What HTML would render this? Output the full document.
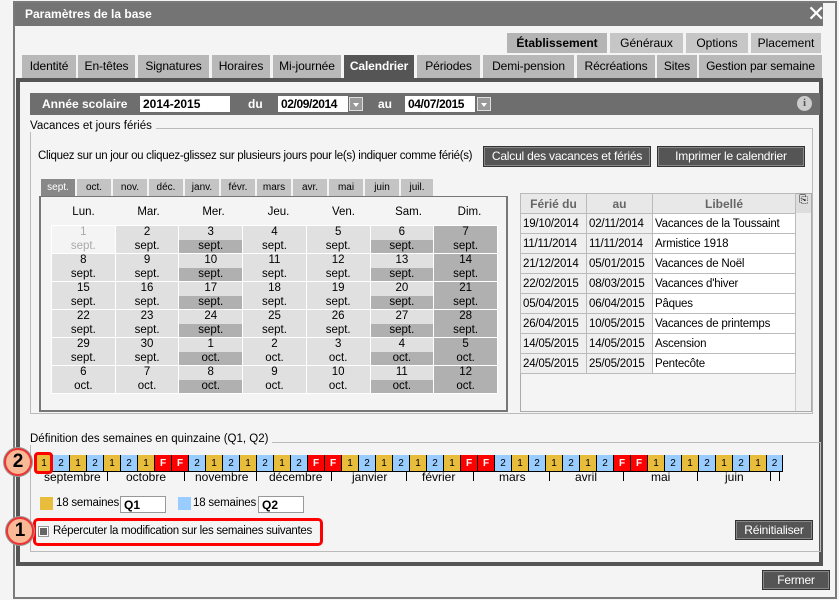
<!DOCTYPE html>
<html><head><meta charset="utf-8">
<style>
*{box-sizing:border-box;margin:0;padding:0}
body{width:839px;height:600px;background:#f4f4f4;font-family:"Liberation Sans",Arial,sans-serif;font-size:12px;color:#000;position:relative;overflow:hidden}
.a{position:absolute}
.frame{left:13px;top:1px;width:824px;height:598px;border:2px solid #7a7a7a;background:#f4f4f4}
.title{left:15px;top:3px;width:808px;height:23px;background:#747474;color:#fff;font-weight:bold;font-size:12px;line-height:23px;padding-left:10px}
.t1{top:33px;height:20px;background:#c6c6c6;line-height:20px;text-align:center;font-size:12px}
.t2{top:55px;height:23px;background:#b8b8b8;line-height:23px;text-align:center;font-size:12px;letter-spacing:-0.1px}
.panel{left:16px;top:78px;width:807px;height:488px;border:4px solid #555;background:#f4f4f4}
.hbar{left:30px;top:93px;width:790px;height:22px;background:#6e6e6e;color:#fff;font-weight:bold;line-height:22px}
.inp{background:#fff;color:#000;font-weight:bold;height:16px;line-height:16px;padding-left:3px;font-size:12px}
.dd{width:14px;height:14px;background:#999;border:1px solid #ddd}
.dd:after{content:"";position:absolute;left:3px;top:5px;border:3px solid transparent;border-top:4px solid #fff}
.btn{background:#555;color:#fff;border:1px solid #333;box-shadow:inset 0 0 0 1px #888;text-align:center;font-size:12px;letter-spacing:-0.2px}
.fs{border:1px solid #bbb}
.leg{background:#f4f4f4;padding-right:4px;font-size:11.5px}
.mt{top:179px;height:17px;width:34px;background:#c4c4c4;text-align:center;font-size:10px;line-height:17px}
table.cal{border-collapse:collapse;position:absolute;left:51px;top:225px;width:447px}
table.cal td{width:65px;height:27.8px;padding:0;border:1px solid #fff;text-align:center;font-size:11.5px;line-height:13.5px;background:#e0e0e0;vertical-align:top}
table.cal td span{display:block;height:13.5px}
table.cal td.w span+span{background:#b0b0b0}
table.cal td.d{background:#b0b0b0}
table.cal td.x{background:#f4f4f4;color:#aaa}
table.fer{border-collapse:collapse;position:absolute;left:520px;top:193px;width:276px}
table.fer td{border:1px solid #bbb;height:20px;padding-left:2px;font-size:11.5px;background:#fff;letter-spacing:-0.2px}
table.fer td.g{background:#efefef}
table.fer th{border:1px solid #bbb;height:20px;background:#e8e8e8;color:#666;font-size:12px}
.wk{width:17px;height:17px;border-left:1px solid #000;border-bottom:1px solid #000;text-align:center;font-size:10px;line-height:18px}
.y{background:#e8bd3c}.b{background:#99ccff}.r{background:#f00;color:#fff;font-weight:bold}
.ml{top:470px;font-size:12px}
.tk{top:472px;width:1px;height:9px;background:#000}
.badge{width:28px;height:28px;border-radius:50%;background:#f9b896;border:2px solid #e33;box-shadow:0 0 0 1px #999;text-align:center;font-weight:bold;font-size:19px;line-height:24px}
</style></head><body>
<div class="a frame"></div>
<div class="a title">Paramètres de la base</div>
<div class="a" style="left:807px;top:3px;color:#fff;font-size:22px;line-height:22px">✕</div>

<div class="a t1" style="left:507px;width:100px;background:#b4b4b4;font-weight:bold">Établissement</div>
<div class="a t1" style="left:610px;width:73px">Généraux</div>
<div class="a t1" style="left:686px;width:62px">Options</div>
<div class="a t1" style="left:751px;width:70px">Placement</div>

<div class="a t2" style="left:22px;width:54px">Identité</div>
<div class="a t2" style="left:78px;width:57px">En-têtes</div>
<div class="a t2" style="left:138px;width:71px">Signatures</div>
<div class="a t2" style="left:212px;width:58px">Horaires</div>
<div class="a t2" style="left:273px;width:68px">Mi-journée</div>
<div class="a t2" style="left:344px;width:70px;background:#555;color:#fff;font-weight:bold">Calendrier</div>
<div class="a t2" style="left:417px;width:63px">Périodes</div>
<div class="a t2" style="left:483px;width:91px">Demi-pension</div>
<div class="a t2" style="left:577px;width:78px">Récréations</div>
<div class="a t2" style="left:657px;width:40px">Sites</div>
<div class="a t2" style="left:699px;width:123px">Gestion par semaine</div>

<div class="a panel"></div>
<div class="a hbar"></div>
<div class="a" style="left:42px;top:93px;line-height:22px;color:#fff;font-weight:bold">Année scolaire</div>
<div class="a inp" style="left:140px;top:96px;width:90px">2014-2015</div>
<div class="a" style="left:248px;top:93px;line-height:22px;color:#fff;font-weight:bold">du</div>
<div class="a inp" style="left:278px;top:96px;width:70px;letter-spacing:-0.4px">02/09/2014</div>
<div class="a dd" style="left:349px;top:97px"></div>
<div class="a" style="left:378px;top:93px;line-height:22px;color:#fff;font-weight:bold">au</div>
<div class="a inp" style="left:405px;top:96px;width:70px;letter-spacing:-0.4px">04/07/2015</div>
<div class="a dd" style="left:477px;top:97px"></div>
<div class="a" style="left:797px;top:96px;width:15px;height:15px;border-radius:50%;background:#ccc;color:#555;font-weight:bold;font-size:11px;text-align:center;line-height:15px;font-family:'Liberation Serif',serif">i</div>

<div class="a fs" style="left:30px;top:128px;width:783px;height:286px"></div>
<div class="a leg" style="left:30px;top:120px">Vacances et jours fériés</div>
<div class="a" style="left:38px;top:150px;font-size:11.5px;letter-spacing:-0.3px">Cliquez sur un jour ou cliquez-glissez sur plusieurs jours pour le(s) indiquer comme férié(s)</div>
<div class="a btn" style="left:483px;top:146px;width:168px;height:21px;line-height:19px">Calcul des vacances et fériés</div>
<div class="a btn" style="left:657px;top:146px;width:148px;height:21px;line-height:19px">Imprimer le calendrier</div>

<div class="a mt" style="left:41px;background:#888;color:#fff">sept.</div>
<div class="a mt" style="left:77px">oct.</div>
<div class="a mt" style="left:113px">nov.</div>
<div class="a mt" style="left:149px">déc.</div>
<div class="a mt" style="left:185px">janv.</div>
<div class="a mt" style="left:221px">févr.</div>
<div class="a mt" style="left:257px">mars</div>
<div class="a mt" style="left:293px">avr.</div>
<div class="a mt" style="left:329px">mai</div>
<div class="a mt" style="left:365px">juin</div>
<div class="a mt" style="left:401px;width:32px">juil.</div>

<div class="a" style="left:39px;top:196px;width:469px;height:216px;border:2px solid #777;border-top-width:1px"></div>
<div class="a" style="left:51px;top:206px;width:447px;display:flex;font-size:11.5px">
<div style="width:65px;text-align:center">Lun.</div><div style="width:65px;text-align:center">Mar.</div><div style="width:65px;text-align:center">Mer.</div><div style="width:65px;text-align:center">Jeu.</div><div style="width:65px;text-align:center">Ven.</div><div style="width:65px;text-align:center">Sam.</div><div style="width:57px;text-align:center">Dim.</div></div>
<table class="cal">
<tr><td class="x"><span>1</span><span>sept.</span></td><td><span>2</span><span>sept.</span></td><td class="w"><span>3</span><span>sept.</span></td><td><span>4</span><span>sept.</span></td><td><span>5</span><span>sept.</span></td><td class="w"><span>6</span><span>sept.</span></td><td class="d" style="width:57px"><span>7</span><span>sept.</span></td></tr>
<tr><td><span>8</span><span>sept.</span></td><td><span>9</span><span>sept.</span></td><td class="w"><span>10</span><span>sept.</span></td><td><span>11</span><span>sept.</span></td><td><span>12</span><span>sept.</span></td><td class="w"><span>13</span><span>sept.</span></td><td class="d"><span>14</span><span>sept.</span></td></tr>
<tr><td><span>15</span><span>sept.</span></td><td><span>16</span><span>sept.</span></td><td class="w"><span>17</span><span>sept.</span></td><td><span>18</span><span>sept.</span></td><td><span>19</span><span>sept.</span></td><td class="w"><span>20</span><span>sept.</span></td><td class="d"><span>21</span><span>sept.</span></td></tr>
<tr><td><span>22</span><span>sept.</span></td><td><span>23</span><span>sept.</span></td><td class="w"><span>24</span><span>sept.</span></td><td><span>25</span><span>sept.</span></td><td><span>26</span><span>sept.</span></td><td class="w"><span>27</span><span>sept.</span></td><td class="d"><span>28</span><span>sept.</span></td></tr>
<tr><td><span>29</span><span>sept.</span></td><td><span>30</span><span>sept.</span></td><td class="w"><span>1</span><span>oct.</span></td><td><span>2</span><span>oct.</span></td><td><span>3</span><span>oct.</span></td><td class="w"><span>4</span><span>oct.</span></td><td class="d"><span>5</span><span>oct.</span></td></tr>
<tr><td><span>6</span><span>oct.</span></td><td><span>7</span><span>oct.</span></td><td class="w"><span>8</span><span>oct.</span></td><td><span>9</span><span>oct.</span></td><td><span>10</span><span>oct.</span></td><td class="w"><span>11</span><span>oct.</span></td><td class="d"><span>12</span><span>oct.</span></td></tr>
</table>

<div class="a" style="left:520px;top:193px;width:292px;height:219px;border:1px solid #aaa;background:#f4f4f4"></div>
<div class="a" style="left:795px;top:213px;width:16px;height:198px;background:#f0f0f0;border-left:1px solid #ccc"></div>
<div class="a" style="left:796px;top:194px;width:15px;height:19px;background:#ddd;font-size:11px;text-align:center">⎘</div>
<table class="fer">
<tr><th style="width:66px">Férié du</th><th style="width:66px">au</th><th>Libellé</th></tr>
<tr><td class="g">19/10/2014</td><td class="g">02/11/2014</td><td>Vacances de la Toussaint</td></tr>
<tr><td class="g">11/11/2014</td><td class="g">11/11/2014</td><td>Armistice 1918</td></tr>
<tr><td class="g">21/12/2014</td><td class="g">05/01/2015</td><td>Vacances de Noël</td></tr>
<tr><td class="g">22/02/2015</td><td class="g">08/03/2015</td><td>Vacances d'hiver</td></tr>
<tr><td class="g">05/04/2015</td><td class="g">06/04/2015</td><td>Pâques</td></tr>
<tr><td class="g">26/04/2015</td><td class="g">10/05/2015</td><td>Vacances de printemps</td></tr>
<tr><td class="g">14/05/2015</td><td class="g">14/05/2015</td><td>Ascension</td></tr>
<tr><td class="g">24/05/2015</td><td class="g">25/05/2015</td><td>Pentecôte</td></tr>
</table>

<div class="a fs" style="left:30px;top:442px;width:791px;height:110px"></div>
<div class="a leg" style="left:30px;top:433px">Définition des semaines en quinzaine (Q1, Q2)</div>

<div class="a" style="left:35px;top:455px;display:flex">
<div class="wk y">1</div><div class="wk b">2</div><div class="wk y">1</div><div class="wk b">2</div><div class="wk y">1</div><div class="wk b">2</div><div class="wk y">1</div><div class="wk r">F</div><div class="wk r">F</div>
<div class="wk b">2</div><div class="wk y">1</div><div class="wk b">2</div><div class="wk y">1</div><div class="wk b">2</div><div class="wk y">1</div><div class="wk b">2</div><div class="wk r">F</div><div class="wk r">F</div>
<div class="wk y">1</div><div class="wk b">2</div><div class="wk y">1</div><div class="wk b">2</div><div class="wk y">1</div><div class="wk b">2</div><div class="wk y">1</div><div class="wk r">F</div><div class="wk r">F</div>
<div class="wk b">2</div><div class="wk y">1</div><div class="wk b">2</div><div class="wk y">1</div><div class="wk b">2</div><div class="wk y">1</div><div class="wk b">2</div><div class="wk r">F</div><div class="wk r">F</div>
<div class="wk y">1</div><div class="wk b">2</div><div class="wk y">1</div><div class="wk b">2</div><div class="wk y">1</div><div class="wk b">2</div><div class="wk y">1</div><div class="wk b" style="border-right:1px solid #000">2</div>
</div>
<div class="a tk" style="left:107px"></div><div class="a tk" style="left:184px"></div><div class="a tk" style="left:256px"></div><div class="a tk" style="left:331px"></div><div class="a tk" style="left:406px"></div><div class="a tk" style="left:473px"></div><div class="a tk" style="left:549px"></div><div class="a tk" style="left:623px"></div><div class="a tk" style="left:697px"></div><div class="a tk" style="left:770px"></div><div class="a tk" style="left:779px"></div>
<div class="a ml" style="left:44px">septembre</div>
<div class="a ml" style="left:126px">octobre</div>
<div class="a ml" style="left:195px">novembre</div>
<div class="a ml" style="left:269px">décembre</div>
<div class="a ml" style="left:352px">janvier</div>
<div class="a ml" style="left:422px">février</div>
<div class="a ml" style="left:499px">mars</div>
<div class="a ml" style="left:575px">avril</div>
<div class="a ml" style="left:651px">mai</div>
<div class="a ml" style="left:725px">juin</div>

<div class="a" style="left:34px;top:452px;width:19px;height:22px;border:3px solid #f00;border-radius:4px"></div>
<div class="a badge" style="left:4px;top:448px">2</div>

<div class="a y" style="left:40px;top:497px;width:13px;height:13px"></div>
<div class="a" style="left:56px;top:497px;font-size:11.5px;letter-spacing:-0.2px">18 semaines</div>
<div class="a inp" style="left:120px;top:496px;width:46px;height:17px;border:1px solid #999">Q1</div>
<div class="a b" style="left:178px;top:497px;width:13px;height:13px"></div>
<div class="a" style="left:193px;top:497px;font-size:11.5px;letter-spacing:-0.2px">18 semaines</div>
<div class="a inp" style="left:258px;top:496px;width:46px;height:17px;border:1px solid #999">Q2</div>

<div class="a" style="left:33px;top:518px;width:290px;height:28px;border:3px solid #f00;border-radius:5px"></div>
<div class="a" style="left:38px;top:526px;width:11px;height:11px;border:1px solid #999;background:#fff"><div style="margin:1px;width:7px;height:7px;background:#666"></div></div>
<div class="a" style="left:53px;top:525px;font-size:11.5px;letter-spacing:-0.3px">Répercuter la modification sur les semaines suivantes</div>
<div class="a badge" style="left:6px;top:517px">1</div>

<div class="a btn" style="left:735px;top:520px;width:78px;height:20px;line-height:18px">Réinitialiser</div>
<div class="a btn" style="left:762px;top:570px;width:68px;height:20px;line-height:18px">Fermer</div>
</body></html>
